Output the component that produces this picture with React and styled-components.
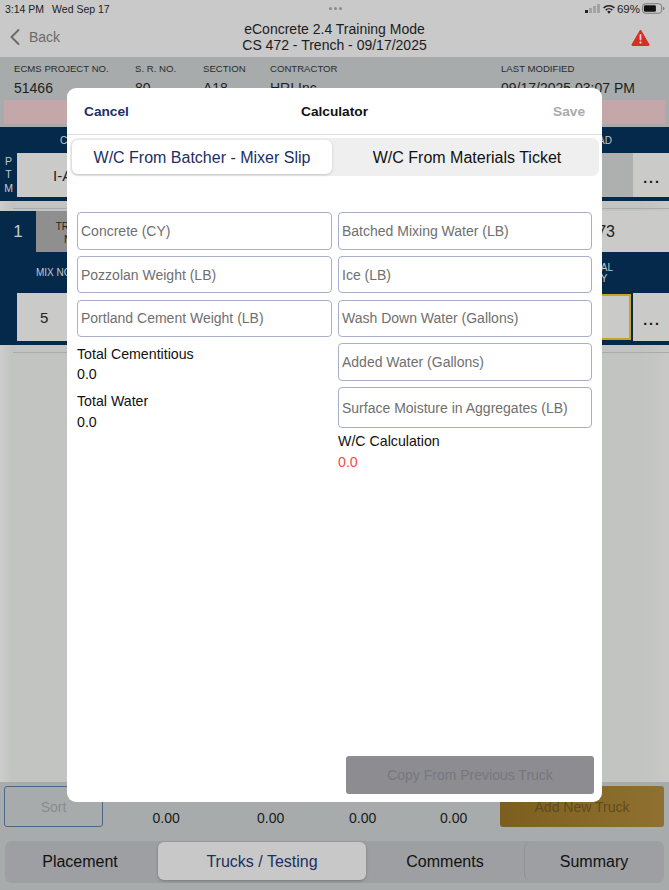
import styled, { createGlobalStyle } from "styled-components";
import { ChevronLeft } from "lucide-react";

const navy = "#05294a";
const cellGray = "#cacbc8";

const GlobalStyle = createGlobalStyle`
    html, body {
        margin: 0;
        padding: 0;
        background: #c9c9c9;
    }
    * {
        box-sizing: border-box;
    }
`;

const Page = styled.div`
    position: relative;
    display: flex;
    flex-direction: column;
    width: 669px;
    height: 890px;
    overflow: hidden;
    font-family: "Liberation Sans", Arial, sans-serif;
    color: #111;
    background: linear-gradient(90deg, #cdcdcd 0, #c2c4c1 12px, #c2c4c1 96%, #c8c8c8 100%);
`;

const TopArea = styled.header`
    height: 58px;
    background: #c9c9c9;
    border-bottom: 1px solid #a9a9a9;
    display: flex;
    flex-direction: column;
`;

const StatusBar = styled.div`
    height: 17px;
    padding: 0 4px 0 5px;
    display: grid;
    grid-template-columns: 1fr 1fr 1fr;
    align-items: center;
    font-size: 10.5px;
    color: #222;
`;

const StatusLeft = styled.div`
    display: flex;
    gap: 8px;
`;

const Dots = styled.div`
    display: flex;
    justify-content: center;
    gap: 2px;
`;

const Dot = styled.span`
    width: 3px;
    height: 3px;
    border-radius: 50%;
    background: #8a8a8a;
`;

const StatusRight = styled.div`
    display: flex;
    justify-content: flex-end;
    align-items: center;
    gap: 2px;
    font-size: 11.5px;
`;

const Signal = styled.div`
    display: flex;
    align-items: flex-end;
    gap: 1px;
    margin-right: 1px;
`;

const Bar = styled.span`
    width: 3px;
    height: ${(p) => p.$h}px;
    background: ${(p) => (p.$on ? "#222" : "#a3a3a3")};
`;

const NavBar = styled.div`
    flex: 1;
    display: grid;
    grid-template-columns: 120px 1fr 102px;
    align-items: center;
    padding: 0 19px 0 1px;
`;

const BackLink = styled.div`
    display: flex;
    align-items: center;
    font-size: 14px;
    color: #6a6a6a;
`;

const NavTitle = styled.div`
    text-align: center;
    font-size: 14px;
    line-height: 16.4px;
    color: #1c1c1c;
`;

const NavAlert = styled.div`
    display: flex;
    justify-content: flex-end;
`;

const InfoBand = styled.section`
    height: 69px;
    background: #a7abab;
    display: flex;
    flex-direction: column;
`;

const InfoGrid = styled.div`
    display: grid;
    grid-template-columns: 121px 68px 67px 231px 1fr;
    padding: 5px 0 0 14px;
    height: 42px;
`;

const InfoLabel = styled.div`
    font-size: 9.6px;
    line-height: 12px;
    color: #2b2b2b;
`;

const InfoValue = styled.div`
    font-size: 14px;
    line-height: 17px;
    margin-top: 5px;
    color: #1e1e1e;
    white-space: nowrap;
`;

const Warning = styled.div`
    height: 24px;
    margin: 0 4px;
    background: #c4a8a9;
`;

const NavyBlock = styled.section`
    background: ${navy};
    color: #c4c8cc;
`;

const HeadRow = styled.div`
    height: ${(p) => p.$h}px;
    display: flex;
    align-items: center;
    justify-content: space-between;
    font-size: 10px;
    line-height: 11px;
    padding-left: ${(p) => p.$left}px;
    padding-right: ${(p) => p.$right}px;
`;

const PtmRow = styled.div`
    display: flex;
    height: 44px;
`;

const PtmLabel = styled.div`
    width: 17px;
    display: flex;
    flex-direction: column;
    align-items: center;
    justify-content: center;
    font-size: 10.5px;
    line-height: 13.5px;
`;

const PtmCell = styled.div`
    flex: 1;
    display: flex;
    align-items: center;
    padding-left: 36px;
    font-size: 15px;
    color: #222;
    background: linear-gradient(90deg, ${cellGray} 0, ${cellGray} 50%, #aeb0b0 90%);
`;

const MoreCell = styled.div`
    width: 36px;
    margin-left: ${(p) => p.$gap}px;
    background: ${cellGray};
    color: #111;
    display: flex;
    align-items: center;
    justify-content: center;
    padding: 6px 0 0 2px;
    font-size: 14px;
    font-weight: 700;
    letter-spacing: 2px;
`;

const Gap = styled.div`
    height: ${(p) => p.$h}px;
    border-bottom: ${(p) => (p.$line ? "1px solid #a9abaa" : "none")};
    margin-left: ${(p) => (p.$line ? 13 : 0)}px;
`;

const TruckRow = styled.div`
    display: flex;
    height: 41px;
    background: ${cellGray};
`;

const TruckNumber = styled.div`
    width: 36px;
    background: ${navy};
    color: #c4c8cc;
    display: flex;
    align-items: center;
    justify-content: center;
    font-size: 17px;
`;

const TruckTag = styled.div`
    width: 74px;
    background: #8e8f8e;
    color: #222;
    display: flex;
    align-items: center;
    justify-content: center;
    text-align: center;
    padding-top: 3px;
    font-size: 10px;
    line-height: 13px;
`;

const TruckValue = styled.div`
    flex: 1;
    display: flex;
    align-items: center;
    justify-content: flex-end;
    padding-right: 54px;
    font-size: 16px;
    color: #222;
`;

const MixRow = styled.div`
    display: flex;
    height: 48px;
    padding-left: 17px;
`;

const MixCell = styled.div`
    flex: 1;
    display: flex;
    align-items: center;
    padding-left: 23px;
    background: ${cellGray};
    color: #222;
    font-size: 15px;
`;

const MixField = styled.div`
    width: 90px;
    margin: 1px 0 1px 0;
    background: ${cellGray};
    border: 2px solid #c9a227;
    border-left: none;
`;

const Spacer = styled.div`
    flex: 1;
`;

const BottomBand = styled.footer`
    height: 108px;
    background: #a7abab;
    padding: 4px 5px 7px 4px;
    display: flex;
    flex-direction: column;
    gap: 14px;
`;

const ActionRow = styled.div`
    height: 41px;
    display: flex;
    justify-content: space-between;
`;

const SortButton = styled.div`
    width: 99px;
    border: 1px solid #4d6788;
    border-radius: 3px;
    display: flex;
    align-items: center;
    justify-content: center;
    font-size: 14px;
    color: #878b8d;
`;

const Totals = styled.div`
    flex: 1;
    display: grid;
    grid-template-columns: 104.5px 92px 91px 1fr;
    align-items: end;
    padding: 0 0 0 49.5px;
    font-size: 14px;
    line-height: 17px;
    color: #1a1a1a;
`;

const AddButton = styled.div`
    width: 164px;
    background: linear-gradient(90deg, #7c5f1e, #8f7030);
    border-radius: 3px;
    display: flex;
    align-items: center;
    justify-content: center;
    font-size: 14px;
    color: #5f4c1e;
`;

const MainTabs = styled.nav`
    height: 42px;
    margin-left: 1px;
    padding: 1px;
    background: #9d9fa2;
    border-radius: 7px;
    display: grid;
    grid-template-columns: 152px 208px 158px 1fr;
    align-items: stretch;
`;

const MainTab = styled.div`
    display: flex;
    align-items: center;
    justify-content: center;
    font-size: 16px;
    border-radius: 6px;
    margin-bottom: 2px;
    padding-top: 2px;
    padding-right: ${(p) => (p.$first ? 4 : 0)}px;
    color: ${(p) => (p.$active ? "#1c2f63" : "#111")};
    background: ${(p) => (p.$active ? "#c8c8c8" : "transparent")};
    box-shadow: ${(p) => (p.$active ? "0 1px 3px rgba(0,0,0,.25)" : "none")};
    border-left: ${(p) => (p.$line ? "1px solid #8f9194" : "none")};
`;

const Modal = styled.div`
    position: absolute;
    left: 67px;
    top: 88px;
    width: 535px;
    height: 714px;
    background: #fff;
    border-radius: 9px;
    display: flex;
    flex-direction: column;
`;

const ModalHeader = styled.div`
    height: 47px;
    padding: 0 17px;
    border-bottom: 1px solid #dedede;
    display: grid;
    grid-template-columns: 1fr auto 1fr;
    align-items: center;
    font-size: 13.7px;
`;

const Cancel = styled.div`
    font-weight: 700;
    color: #1c2f63;
`;

const ModalTitle = styled.div`
    font-weight: 700;
    color: #111;
`;

const Save = styled.div`
    font-weight: 700;
    color: #a9a9ad;
    text-align: right;
`;

const CalcTabs = styled.div`
    margin: 3px 3px 0;
    height: 38px;
    padding: 2px;
    border-radius: 7px;
    background: #efefef;
    display: grid;
    grid-template-columns: 260px 1fr;
`;

const CalcTab = styled.div`
    display: flex;
    align-items: center;
    justify-content: center;
    padding-top: 1px;
    padding-left: ${(p) => (p.$active ? 0 : 5)}px;
    font-size: 16px;
    border-radius: 6px;
    color: ${(p) => (p.$active ? "#1c2f63" : "#111")};
    background: ${(p) => (p.$active ? "#fff" : "transparent")};
    box-shadow: ${(p) => (p.$active ? "0 1px 3px rgba(0,0,0,.18)" : "none")};
`;

const FormGrid = styled.div`
    margin-top: 36.3px;
    padding: 0 10px;
    display: grid;
    grid-template-columns: 255px 254px;
    column-gap: 6px;
    align-items: start;
`;

const Column = styled.div`
    display: flex;
    flex-direction: column;
    gap: 6.4px;
`;

const Field = styled.input`
    width: 100%;
    height: ${(p) => p.$h || 37.3}px;
    padding: 0 3px;
    border: 1px solid #a8b0c9;
    border-radius: 4px;
    background: #fff;
    font-family: inherit;
    font-size: 14px;
    outline: none;
    &::placeholder {
        color: #6f6f6f;
        opacity: 1;
    }
`;

const Result = styled.div`
    font-size: 14.2px;
    line-height: 21px;
    margin-top: ${(p) => p.$top}px;
    color: #111;
`;

const ResultValue = styled.div`
    margin-top: ${(p) => p.$top}px;
    color: ${(p) => (p.$red ? "#f44b45" : "#111")};
`;

const ModalFooter = styled.div`
    margin-top: auto;
    padding: 0 8px 8px 0;
    display: flex;
    justify-content: flex-end;
`;

const CopyButton = styled.div`
    width: 248px;
    height: 38px;
    border-radius: 3px;
    background: #8c8c91;
    display: flex;
    align-items: center;
    justify-content: center;
    font-size: 14px;
    color: #77777c;
`;

function WifiIcon() {
    return (
        <svg width="12" height="10" viewBox="0 0 14 11">
            <path d="M7 11 4.9 8.7a3 3 0 0 1 4.2 0Z" fill="#222" />
            <path d="M3.7 7.4a4.8 4.8 0 0 1 6.6 0l1.1-1.2a6.5 6.5 0 0 0-8.8 0Z" fill="#222" />
            <path d="M1.3 4.9a8.2 8.2 0 0 1 11.4 0L14 3.7a10 10 0 0 0-14 0Z" fill="#222" />
        </svg>
    );
}

function BatteryIcon() {
    return (
        <svg width="23" height="11" viewBox="0 0 24 11">
            <rect x="0.5" y="0.5" width="20" height="10" rx="3" fill="none" stroke="#777" />
            <rect x="2" y="2" width="12.5" height="7" rx="1.5" fill="#111" />
            <path d="M22 3.7c1 .3 1.5 1 1.5 1.8S23 7 22 7.3Z" fill="#777" />
        </svg>
    );
}

function AlertIcon() {
    return (
        <svg width="19" height="17" viewBox="0 0 19 17">
            <path d="M9.5 1 18 15.5a.6.6 0 0 1-.5 1h-16a.6.6 0 0 1-.5-1Z" fill="#d92c27" stroke="#d92c27" strokeLinejoin="round" />
            <rect x="8.6" y="5" width="1.8" height="6.5" rx=".9" fill="#f4d4d2" />
            <circle cx="9.5" cy="13.6" r="1.1" fill="#f4d4d2" />
        </svg>
    );
}

export default function App() {
    const leftFields = ["Concrete (CY)", "Pozzolan Weight (LB)", "Portland Cement Weight (LB)"];
    const rightFields = ["Batched Mixing Water (LB)", "Ice (LB)", "Wash Down Water (Gallons)", "Added Water (Gallons)"];

    return (
        <Page>
            <GlobalStyle />
            <TopArea>
                <StatusBar>
                    <StatusLeft>
                        <span>3:14 PM</span>
                        <span>Wed Sep 17</span>
                    </StatusLeft>
                    <Dots>
                        <Dot />
                        <Dot />
                        <Dot />
                    </Dots>
                    <StatusRight>
                        <Signal>
                            <Bar $h={3} $on />
                            <Bar $h={5} />
                            <Bar $h={7} />
                            <Bar $h={9} />
                        </Signal>
                        <WifiIcon />
                        <span>69%</span>
                        <BatteryIcon />
                    </StatusRight>
                </StatusBar>
                <NavBar>
                    <BackLink>
                        <ChevronLeft size={28} strokeWidth={1.6} color="#6a6a6a" />
                        Back
                    </BackLink>
                    <NavTitle>
                        eConcrete 2.4 Training Mode
                        <br />
                        CS 472 - Trench - 09/17/2025
                    </NavTitle>
                    <NavAlert>
                        <AlertIcon />
                    </NavAlert>
                </NavBar>
            </TopArea>

            <InfoBand>
                <InfoGrid>
                    <div>
                        <InfoLabel>ECMS PROJECT NO.</InfoLabel>
                        <InfoValue>51466</InfoValue>
                    </div>
                    <div>
                        <InfoLabel>S. R. NO.</InfoLabel>
                        <InfoValue>80</InfoValue>
                    </div>
                    <div>
                        <InfoLabel>SECTION</InfoLabel>
                        <InfoValue>A18</InfoValue>
                    </div>
                    <div>
                        <InfoLabel>CONTRACTOR</InfoLabel>
                        <InfoValue>HRI Inc</InfoValue>
                    </div>
                    <div>
                        <InfoLabel>LAST MODIFIED</InfoLabel>
                        <InfoValue>09/17/2025 03:07 PM</InfoValue>
                    </div>
                </InfoGrid>
                <Warning />
            </InfoBand>

            <NavyBlock>
                <HeadRow $h={26} $left={60} $right={57}>
                    <span>C</span>
                    <span>AD</span>
                </HeadRow>
                <PtmRow>
                    <PtmLabel>
                        <span>P</span>
                        <span>T</span>
                        <span>M</span>
                    </PtmLabel>
                    <PtmCell>I-A</PtmCell>
                    <MoreCell $gap={0}>...</MoreCell>
                </PtmRow>
                <Gap $h={4} />
            </NavyBlock>
            <Gap $h={8} $line />
            <Gap $h={2} />

            <NavyBlock>
                <TruckRow>
                    <TruckNumber>1</TruckNumber>
                    <TruckTag>
                        TRUCK
                        <br />
                        NO.
                    </TruckTag>
                    <TruckValue>73</TruckValue>
                </TruckRow>
                <HeadRow $h={41} $left={36} $right={56}>
                    <span>MIX NO.</span>
                    <span>
                        AL
                        <br />
                        Y
                    </span>
                </HeadRow>
                <MixRow>
                    <MixCell>5</MixCell>
                    <MixField />
                    <MoreCell $gap={2}>...</MoreCell>
                </MixRow>
                <Gap $h={4} />
            </NavyBlock>
            <Gap $h={8} $line />

            <Spacer />

            <BottomBand>
                <ActionRow>
                    <SortButton>Sort</SortButton>
                    <Totals>
                        <span>0.00</span>
                        <span>0.00</span>
                        <span>0.00</span>
                        <span>0.00</span>
                    </Totals>
                    <AddButton>Add New Truck</AddButton>
                </ActionRow>
                <MainTabs>
                    <MainTab $first>Placement</MainTab>
                    <MainTab $active>Trucks / Testing</MainTab>
                    <MainTab>Comments</MainTab>
                    <MainTab $line>Summary</MainTab>
                </MainTabs>
            </BottomBand>

            <Modal>
                <ModalHeader>
                    <Cancel>Cancel</Cancel>
                    <ModalTitle>Calculator</ModalTitle>
                    <Save>Save</Save>
                </ModalHeader>
                <CalcTabs>
                    <CalcTab $active>W/C From Batcher - Mixer Slip</CalcTab>
                    <CalcTab>W/C From Materials Ticket</CalcTab>
                </CalcTabs>
                <FormGrid>
                    <Column>
                        {leftFields.map((f) => (
                            <Field key={f} placeholder={f} />
                        ))}
                        <Result $top={0.5}>
                            Total Cementitious
                            <ResultValue $top={-1}>0.0</ResultValue>
                        </Result>
                        <Result $top={0}>
                            Total Water
                            <ResultValue $top={0}>0.0</ResultValue>
                        </Result>
                    </Column>
                    <Column>
                        {rightFields.map((f) => (
                            <Field key={f} placeholder={f} />
                        ))}
                        <Field $h={41} placeholder="Surface Moisture in Aggregates (LB)" />
                        <Result $top={-3.5}>
                            W/C Calculation
                            <ResultValue $top={0} $red>0.0</ResultValue>
                        </Result>
                    </Column>
                </FormGrid>
                <ModalFooter>
                    <CopyButton>Copy From Previous Truck</CopyButton>
                </ModalFooter>
            </Modal>
        </Page>
    );
}
